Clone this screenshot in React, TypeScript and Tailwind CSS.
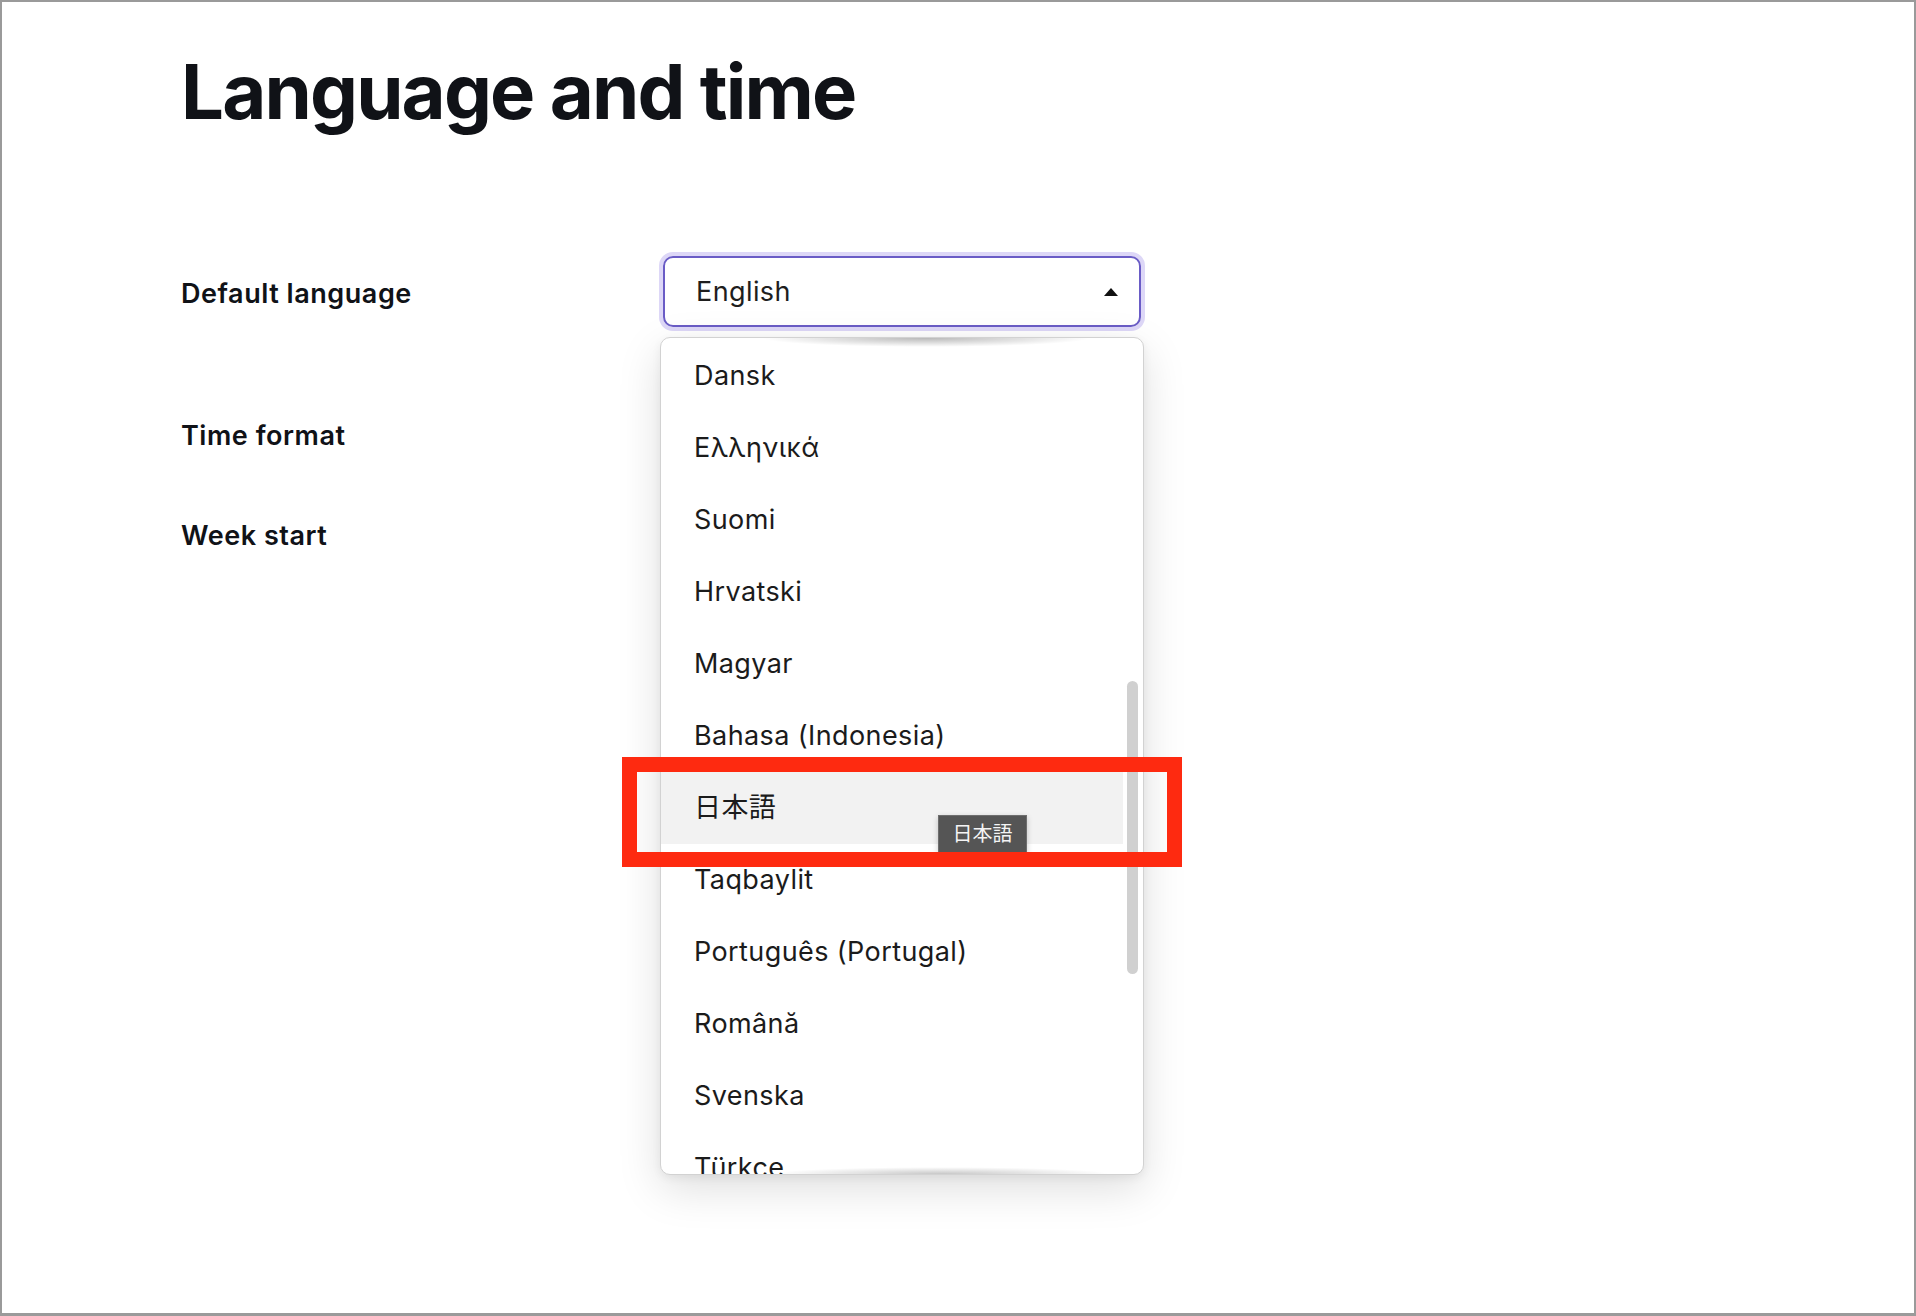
const languages = [
  'Dansk',
  'Ελληνικά',
  'Suomi',
  'Hrvatski',
  'Magyar',
  'Bahasa (Indonesia)',
  '日本語',
  'Taqbaylit',
  'Português (Portugal)',
  'Română',
  'Svenska',
  'Türkçe',
]

const hovered = '日本語'

function LanguageOption({ label }: { label: string }) {
  const active = label === hovered
  return (
    <div
      className={`relative flex h-[72px] w-[462px] shrink-0 items-center pl-[33px] text-[27px] tracking-[0.015em] text-[#1b1b1b] ${
        active ? 'bg-[#f2f2f2]' : ''
      }`}
    >
      {label}
      {active && (
        <div className="absolute left-[277px] top-[43px] flex h-[38px] w-[89px] items-center justify-center border border-[#6e6e6e] bg-[#555555] text-[20px] tracking-normal text-[#f4f4f4] shadow-[0_2px_6px_rgba(0,0,0,0.2)]">
          日本語
        </div>
      )}
    </div>
  )
}

export default function App() {
  return (
    <div className="h-[1316px] w-[1916px] border-2 border-b-[3px] border-[#9a9a9a] bg-white font-['Inter','Noto_Sans_CJK_JP',sans-serif] text-[#101217]">
      <div className="pl-[179px] pt-[51px]">
        <h1 className="text-[76px] font-bold leading-none tracking-[-0.024em]">Language and time</h1>

        <div className="mt-[127px] grid grid-cols-[479px_484px] grid-rows-[71px_124px_100px] items-center text-[27px] font-semibold leading-[30px] tracking-[0.02em]">
          <div className="pt-1">Default language</div>

          <div className="relative font-normal">
            <div className="mx-[3px] flex h-[71px] items-center justify-between rounded-[10px] border-2 border-[#6a5cc6] pl-[31px] pr-[21px] tracking-[0.015em] text-[#1e1e1e] shadow-[0_0_0_4px_#ddd7f7]">
              <span>English</span>
              <svg width="14" height="8" viewBox="0 0 14 8">
                <path d="M7 0 L14 8 L0 8 Z" fill="#111" />
              </svg>
            </div>

            <div className="absolute left-0 top-[81px] z-10 h-[838px] w-[484px] overflow-hidden rounded-[10px] border border-[#d2d2d2] bg-white shadow-[0_14px_44px_rgba(0,0,0,0.13),0_3px_10px_rgba(0,0,0,0.06)]">
              <div className="flex flex-col pt-[2px]">
                {languages.map((l) => (
                  <LanguageOption key={l} label={l} />
                ))}
              </div>
              <div className="absolute left-[100px] top-0 h-[9px] w-[330px] bg-[radial-gradient(ellipse_at_top,rgba(0,0,0,0.28),transparent_70%)]" />
              <div className="absolute bottom-0 left-[110px] h-[7px] w-[340px] bg-[radial-gradient(ellipse_at_bottom,rgba(0,0,0,0.22),transparent_70%)]" />
              <div className="absolute left-[466px] top-[343px] h-[293px] w-[11px] rounded-full bg-[#d0d0d0]" />
            </div>

            <div className="absolute left-[-38px] top-[501px] z-20 h-[110px] w-[560px] border-[15px] border-[#fe2a10]" />
          </div>

          <div className="col-start-1 self-end">Time format</div>
          <div className="col-start-1 self-end">Week start</div>
        </div>
      </div>
    </div>
  )
}
